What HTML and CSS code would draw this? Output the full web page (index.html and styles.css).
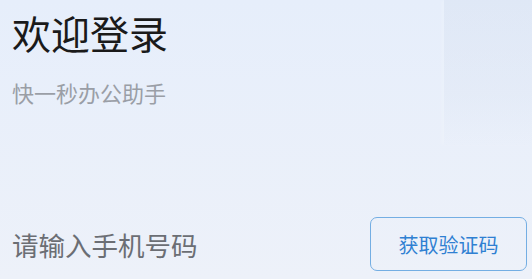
FILE: index.html
```html
<!DOCTYPE html>
<html lang="zh-CN">
<head>
<meta charset="utf-8">
<link rel="stylesheet" href="styles.css">
</head>
<body>
<div class="page">
  <div class="deco"></div>
  <header class="head">
    <h1 class="title">欢迎登录</h1>
    <p class="subtitle">快一秒办公助手</p>
  </header>
  <form class="form-row">
    <input class="phone" type="text" placeholder="请输入手机号码">
    <button class="code-btn" type="button">获取验证码</button>
  </form>
</div>
</body>
</html>
```
FILE: styles.css
```css
* { box-sizing: border-box; }
html, body { margin: 0; padding: 0; }
body {
  width: 532px;
  height: 279px;
  overflow: hidden;
  font-family: "Noto Sans CJK SC", "Noto Sans", sans-serif;
  background: linear-gradient(180deg, #e6eefb 0%, #edf1f9 100%);
}
.page {
  position: relative;
  height: 279px;
  display: flex;
  flex-direction: column;
  justify-content: space-between;
  padding: 9px 5px 8px 12px;
}
.deco {
  position: absolute;
  top: 0;
  right: 0;
  width: 88px;
  height: 145px;
  background: linear-gradient(180deg, rgba(212,222,238,0.38) 0%, rgba(218,226,240,0.28) 65%, rgba(230,236,248,0) 100%);
  box-shadow: -3px 0 3px rgba(255,255,255,0.15);
  pointer-events: none;
}
.head { position: relative; }
.title {
  margin: 0;
  font-size: 39px;
  font-weight: 400;
  line-height: 46px;
  color: #1a1a1a;
}
.subtitle {
  margin: 24px 0 0;
  font-size: 22px;
  line-height: 26px;
  color: #9a9ea6;
}
.form-row {
  position: relative;
  margin: 0;
  display: flex;
  align-items: center;
  justify-content: space-between;
}
.phone {
  border: none;
  background: transparent;
  outline: none;
  padding: 0;
  font-family: inherit;
  font-size: 26.5px;
  width: 300px;
  color: #333;
}
.phone::placeholder { color: #6b6e74; }
.code-btn {
  width: 157px;
  height: 54px;
  border: 1px solid #74aee3;
  border-radius: 7px;
  background: transparent;
  font-family: inherit;
  font-size: 20px;
  color: #2f80d2;
  padding: 0;
}
```
